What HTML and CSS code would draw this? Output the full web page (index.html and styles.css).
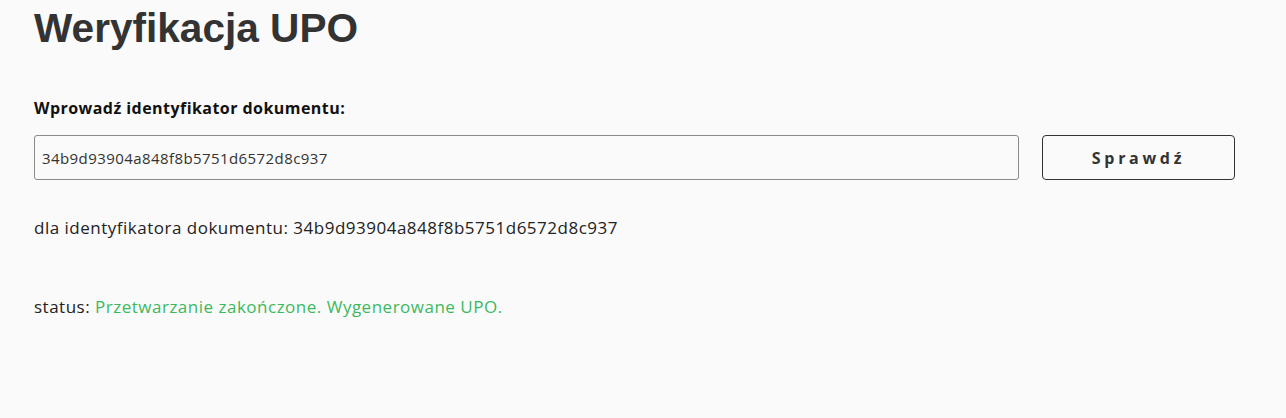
FILE: index.html
```html
<!DOCTYPE html>
<html lang="pl">
<head>
<meta charset="utf-8">
<title>Weryfikacja UPO</title>
<link rel="stylesheet" href="styles.css">
</head>
<body>
<main class="page">
  <h1 class="title">Weryfikacja UPO</h1>
  <form class="form">
    <label class="label" for="docid">Wprowadź identyfikator dokumentu:</label>
    <div class="row">
      <input class="input" id="docid" type="text" value="34b9d93904a848f8b5751d6572d8c937">
      <button class="btn" type="button">Sprawdź</button>
    </div>
  </form>
  <p class="info">dla identyfikatora dokumentu: 34b9d93904a848f8b5751d6572d8c937</p>
  <p class="status">status: <span class="ok">Przetwarzanie zakończone. Wygenerowane UPO.</span></p>
</main>
</body>
</html>
```
FILE: styles.css
```css
html, body {
  margin: 0;
  padding: 0;
  background: #fafafa;
}
body {
  font-family: "Open Sans", "Liberation Sans", sans-serif;
  color: #222;
}
.page {
  padding: 0 51px 0 34px;
}
.title {
  margin: 0;
  padding-top: 5px;
  font-family: "Liberation Sans", Arial, sans-serif;
  font-weight: bold;
  font-size: 40.6px;
  line-height: 46px;
  color: #333;
}
.form {
  margin-top: 46px;
}
.label {
  display: block;
  font-weight: 700;
  font-size: 16px;
  letter-spacing: 0.45px;
  line-height: 22px;
  color: #111;
}
.row {
  display: flex;
  gap: 23px;
  margin-top: 16px;
}
.input {
  flex: 1;
  box-sizing: border-box;
  height: 45px;
  margin: 0;
  padding: 0 7px;
  border: 1px solid #8a8a8a;
  border-radius: 3px;
  background: #fafafa;
  font-family: "Open Sans", sans-serif;
  font-size: 15px;
  letter-spacing: 0.42px;
  color: #333;
}
.btn {
  box-sizing: border-box;
  width: 193px;
  height: 45px;
  margin: 0;
  border: 1px solid #333;
  border-radius: 4px;
  background: #fafafa;
  font-family: "Open Sans", sans-serif;
  font-weight: 700;
  font-size: 16px;
  letter-spacing: 3.7px;
  color: #333;
}
.info {
  margin: 36px 0 0;
  font-size: 17px;
  letter-spacing: 0.5px;
  line-height: 24px;
  color: #222;
}
.status {
  margin: 55px 0 0;
  font-size: 17px;
  letter-spacing: 0.5px;
  line-height: 24px;
  color: #222;
}
.ok {
  color: #3cb95f;
}
```
